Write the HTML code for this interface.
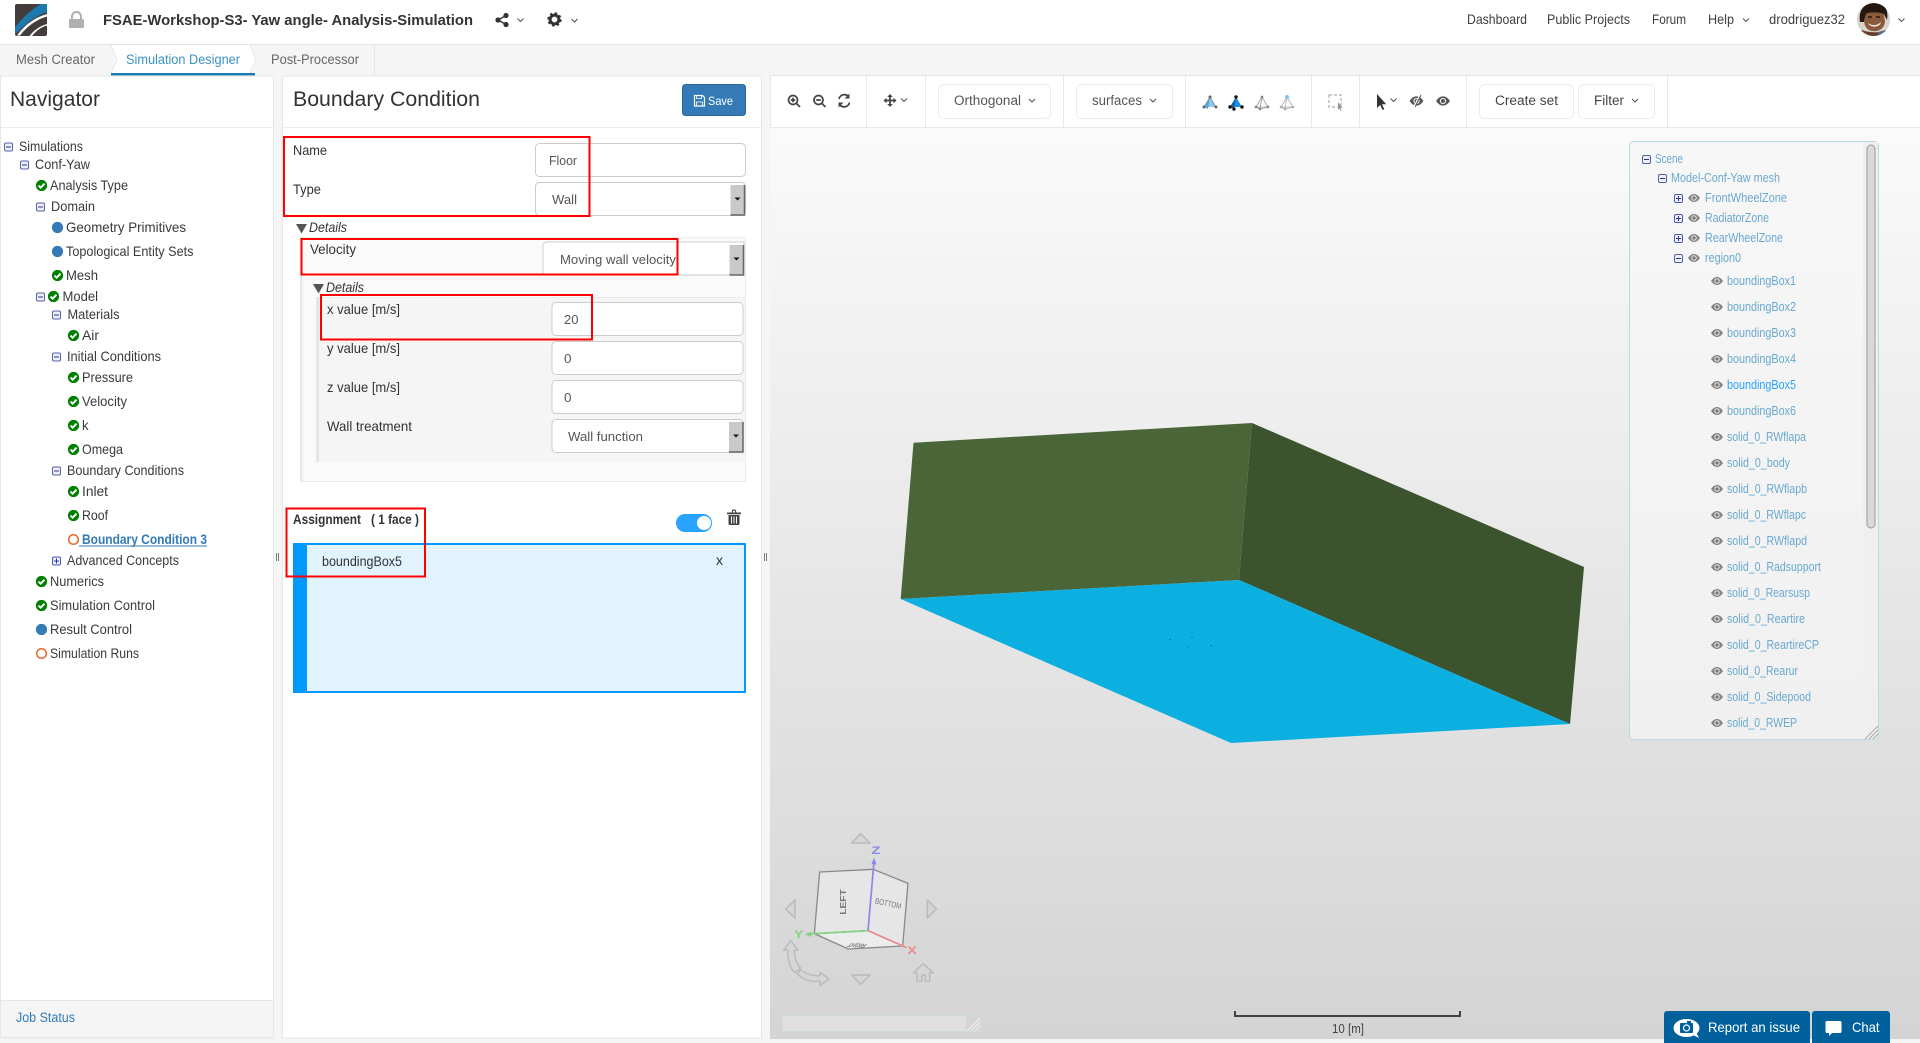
<!DOCTYPE html>
<html lang="en">
<head>
<meta charset="utf-8">
<title>FSAE-Workshop-S3- Yaw angle- Analysis-Simulation</title>
<style>
html,body{margin:0;padding:0;width:1920px;height:1043px;overflow:hidden;background:#f5f5f5}
svg{display:block}
text{font-family:"Liberation Sans",sans-serif;fill:#333;font-size:14px}
.n{font-size:14px;fill:#3a3a3a}
.t{font-size:21px;fill:#333}
.tb{font-size:14px;fill:#3f3f3f}
.v{font-size:13.33px;fill:#555}
.f{font-size:14px;fill:#333}
.d{font-size:14px;font-style:italic;fill:#333}
.s{font-size:12.5px;fill:#6aa9cf}
.b{font-size:13.5px;fill:#555}
</style>
</head>
<body>
<svg xmlns="http://www.w3.org/2000/svg" width="1920" height="1043" viewBox="0 0 1920 1043">
<defs>
<linearGradient id="vp" x1="0" y1="0" x2="0" y2="1"><stop offset="0" stop-color="#fafafa"/><stop offset="1" stop-color="#d4d4d4"/></linearGradient>
<linearGradient id="tr" x1="0" y1="0" x2="0" y2="1"><stop offset="0" stop-color="#f7f7f7"/><stop offset="1" stop-color="#f0f0f0"/></linearGradient>
<g id="ok"><circle r="5.6" fill="#008000"/><path d="M-3 .1L-.9 2.2 3 -1.8" fill="none" stroke="#fff" stroke-width="1.9"/></g>
<g id="bl"><circle r="5.6" fill="#337ab7"/></g>
<g id="or"><circle r="4.8" fill="#fff" stroke="#e8662a" stroke-width="1.5"/></g>
<g id="mi"><rect x="-4" y="-4" width="8" height="8" rx="1.5" fill="#eef0f8" stroke="#5560a8"/><path d="M-2.5 0h5" stroke="#2d3570"/></g>
<g id="pl"><rect x="-4" y="-4" width="8" height="8" rx="1.5" fill="#eef0f8" stroke="#4a55c0"/><path d="M-2.5 0h5M0 -2.5v5" stroke="#2d3590"/></g>
<g id="e"><path d="M-6 0C-4 -3 -2 -4 0 -4S4 -3 6 0C4 3 2 4 0 4S-4 3 -6 0Z" fill="#858585"/><circle r="2.7" fill="#eee"/><circle r="1.7" fill="#777"/></g>
<g id="sb"><rect width="14" height="30" fill="#c9c9c9"/><path d="M14 0V30H0" fill="none" stroke="#666" stroke-width="1.5"/><path d="M4 12.5h6l-3 3z" fill="#111"/></g>
<g id="ch"><path d="M-3 -1.5L0 1.5 3 -1.5" fill="none" stroke="#555" stroke-width="1.1"/></g>
</defs>

<!-- header -->
<rect width="1920" height="44" fill="#fff"/>
<rect y="44" width="1920" height="1" fill="#e4e4e4"/>
<g>
<rect x="15" y="4" width="32" height="32" rx="2" fill="#423d3a"/>
<path d="M47 4V12C38 15 27 22 19 31L15 34V27C22 19 30 10 41 4Z" fill="#1b79ad"/>
<path d="M47 14V16.500C38 19 28 25 20 35.500H17C25 24 36 17 47 14Z" fill="#fff"/>
<path d="M47 24V25.500C41 27 36 31 32 36H29.500C34 30 40 26 47 24Z" fill="#fff"/>
</g>
<g>
<path d="M72 19V16.5a4.5 4.5 0 0 1 9 0V19" fill="none" stroke="#b0b0b0" stroke-width="2"/>
<rect x="69" y="19" width="15" height="9" rx="1.5" fill="#b0b0b0"/>
</g>
<text x="103" y="25" style="font-size:15px;font-weight:700;fill:#333" textLength="370" lengthAdjust="spacingAndGlyphs">FSAE-Workshop-S3- Yaw angle- Analysis-Simulation</text>
<g fill="#333"><circle cx="498" cy="20" r="2.6"/><circle cx="506" cy="15.5" r="2.6"/><circle cx="506" cy="24.5" r="2.6"/><path d="M498 20L506 15.5M498 20L506 24.5" stroke="#333" stroke-width="1.4"/></g>
<use href="#ch" x="520.5" y="20"/>
<g><circle cx="554.5" cy="19.5" r="4.4" fill="none" stroke="#333" stroke-width="3"/><circle cx="554.5" cy="19.5" r="6.2" fill="none" stroke="#333" stroke-width="2" stroke-dasharray="2.4 2.47"/></g>
<use href="#ch" x="574.5" y="20.5"/>
<text class="tb" x="1467" y="24" textLength="60" lengthAdjust="spacingAndGlyphs">Dashboard</text>
<text class="tb" x="1547" y="24" textLength="83" lengthAdjust="spacingAndGlyphs">Public Projects</text>
<text class="tb" x="1652" y="24" textLength="34" lengthAdjust="spacingAndGlyphs">Forum</text>
<text class="tb" x="1708" y="24" textLength="26" lengthAdjust="spacingAndGlyphs">Help</text>
<use href="#ch" x="1746" y="20"/>
<text class="tb" x="1769" y="24" textLength="76" lengthAdjust="spacingAndGlyphs">drodriguez32</text>
<clipPath id="av"><circle cx="1873.5" cy="19.5" r="16.5"/></clipPath>
<g clip-path="url(#av)">
<rect x="1857" y="3" width="33" height="33" fill="#d9d4cc"/>
<path d="M1860 22C1858 8 1866 3 1875 3S1889 9 1887 20L1884 14C1878 12 1870 12 1866 14L1864 22Z" fill="#241710"/>
<path d="M1866 14C1870 12 1878 12 1884 14L1885 22C1884 29 1878 32 1873 31C1868 31 1864 27 1864 20Z" fill="#8a5a3c"/>
<path d="M1868 23C1872 26 1877 26 1881 22C1880 28 1870 28 1868 23Z" fill="#f0e8e0"/>
<path d="M1868 17h4M1876 17h4" stroke="#241710" stroke-width="1.6"/>
<path d="M1857 36L1862 30C1866 32 1880 34 1886 30L1890 36Z" fill="#6b3c2c"/>
<path d="M1878 32L1886 30 1888 36H1878Z" fill="#4e6a8a"/>
</g>
<use href="#ch" x="1901.5" y="20"/>

<!-- tab bar -->
<rect y="45" width="374" height="30" fill="#f5f5f5"/>
<rect x="374" y="45" width="1" height="30" fill="#e4e4e4"/>
<path d="M111 45H250L255 60 250 73H111L116 60Z" fill="#fff"/>
<path d="M111 45L117 60 111 73" fill="none" stroke="#e8e8e8"/>
<path d="M250 45L256 60 250 73" fill="none" stroke="#e8e8e8"/>
<rect x="111" y="73" width="144" height="2.4" fill="#1a7db3"/>
<text x="16" y="64" style="font-size:13.5px;fill:#666" textLength="79" lengthAdjust="spacingAndGlyphs">Mesh Creator</text>
<text x="126" y="64" style="font-size:13.5px;fill:#3d92c4" textLength="114" lengthAdjust="spacingAndGlyphs">Simulation Designer</text>
<text x="271" y="64" style="font-size:13.5px;fill:#666" textLength="88" lengthAdjust="spacingAndGlyphs">Post-Processor</text>

<!-- navigator panel -->
<rect x=".5" y="76" width="273" height="962" fill="#fff" stroke="#e6e6e6"/>
<rect x="1" y="127" width="272" height="1" fill="#ececec"/>
<text class="t" x="10" y="106" textLength="90" lengthAdjust="spacingAndGlyphs">Navigator</text>
<rect x=".5" y="1000.5" width="273" height="37" fill="#f5f5f5" stroke="#e6e6e6"/>
<text x="16" y="1022" style="font-size:13.5px;fill:#337ab7" textLength="59" lengthAdjust="spacingAndGlyphs">Job Status</text>

<use href="#mi" x="8.5" y="147"/><text class="n" x="19" y="151" textLength="64" lengthAdjust="spacingAndGlyphs">Simulations</text>
<use href="#mi" x="24.5" y="165"/><text class="n" x="35" y="169" textLength="55" lengthAdjust="spacingAndGlyphs">Conf-Yaw</text>
<use href="#ok" x="41.5" y="185.5"/><text class="n" x="50" y="190" textLength="78" lengthAdjust="spacingAndGlyphs">Analysis Type</text>
<use href="#mi" x="40.5" y="207"/><text class="n" x="51" y="211" textLength="44" lengthAdjust="spacingAndGlyphs">Domain</text>
<use href="#bl" x="57.5" y="227.5"/><text class="n" x="66" y="232" textLength="120" lengthAdjust="spacingAndGlyphs">Geometry Primitives</text>
<use href="#bl" x="57.5" y="251.5"/><text class="n" x="66" y="256" textLength="127.500" lengthAdjust="spacingAndGlyphs">Topological Entity Sets</text>
<use href="#ok" x="57.500" y="275.5"/><text class="n" x="66" y="280" textLength="32" lengthAdjust="spacingAndGlyphs">Mesh</text>
<use href="#mi" x="40.5" y="297"/><use href="#ok" x="53.5" y="296.5"/><text class="n" x="62.5" y="301" textLength="35.500" lengthAdjust="spacingAndGlyphs">Model</text>
<use href="#mi" x="56.5" y="315"/><text class="n" x="67.5" y="319" textLength="52" lengthAdjust="spacingAndGlyphs">Materials</text>
<use href="#ok" x="73.5" y="335.5"/><text class="n" x="82" y="340" textLength="17" lengthAdjust="spacingAndGlyphs">Air</text>
<use href="#mi" x="56.5" y="357"/><text class="n" x="67" y="361" textLength="94" lengthAdjust="spacingAndGlyphs">Initial Conditions</text>
<use href="#ok" x="73.5" y="377.5"/><text class="n" x="82" y="382" textLength="51" lengthAdjust="spacingAndGlyphs">Pressure</text>
<use href="#ok" x="73.5" y="401.5"/><text class="n" x="82" y="406" textLength="45" lengthAdjust="spacingAndGlyphs">Velocity</text>
<use href="#ok" x="73.5" y="425.5"/><text class="n" x="82" y="430" textLength="6.500" lengthAdjust="spacingAndGlyphs">k</text>
<use href="#ok" x="73.5" y="449.5"/><text class="n" x="82" y="454" textLength="41" lengthAdjust="spacingAndGlyphs">Omega</text>
<use href="#mi" x="56.5" y="471"/><text class="n" x="67" y="475" textLength="117" lengthAdjust="spacingAndGlyphs">Boundary Conditions</text>
<use href="#ok" x="73.5" y="491.5"/><text class="n" x="82" y="496" textLength="26" lengthAdjust="spacingAndGlyphs">Inlet</text>
<use href="#ok" x="73.5" y="515.5"/><text class="n" x="82" y="520" textLength="26" lengthAdjust="spacingAndGlyphs">Roof</text>
<use href="#or" x="73.5" y="539.5"/><text x="82" y="544" style="font-size:14px;font-weight:700;fill:#337ab7" textLength="125" lengthAdjust="spacingAndGlyphs">Boundary Condition 3</text>
<rect x="79" y="545.500" width="128" height="1" fill="#337ab7"/>
<use href="#pl" x="56.5" y="561"/><text class="n" x="67" y="565" textLength="112" lengthAdjust="spacingAndGlyphs">Advanced Concepts</text>
<use href="#ok" x="41.5" y="581.5"/><text class="n" x="50" y="586" textLength="54" lengthAdjust="spacingAndGlyphs">Numerics</text>
<use href="#ok" x="41.5" y="605.5"/><text class="n" x="50" y="610" textLength="105" lengthAdjust="spacingAndGlyphs">Simulation Control</text>
<use href="#bl" x="41.5" y="629.5"/><text class="n" x="50" y="634" textLength="82" lengthAdjust="spacingAndGlyphs">Result Control</text>
<use href="#or" x="41.5" y="653.5"/><text class="n" x="50" y="658" textLength="89" lengthAdjust="spacingAndGlyphs">Simulation Runs</text>

<!-- gutters -->
<path d="M276.5 553v8M278.500 553v8M764.5 553v8M766.500 553v8" stroke="#666" stroke-width=".8"/>

<!-- boundary condition panel -->
<rect x="282.5" y="76" width="479" height="962" fill="#fff" stroke="#e6e6e6"/>
<rect x="283" y="127" width="478" height="1" fill="#ececec"/>
<text class="t" x="293" y="106" textLength="187" lengthAdjust="spacingAndGlyphs">Boundary Condition</text>
<rect x="682.5" y="84.500" width="63" height="31" rx="3" fill="#337ab7" stroke="#2b6699"/>
<path d="M694.5 95.5h8l2 2v8.500h-10z" fill="none" stroke="#fff" stroke-width="1.200"/><path d="M696.500 95.500v3h5v-3M696.5 106v-4h6v4" fill="none" stroke="#fff" stroke-width=".8"/>
<text x="708" y="105" style="font-size:12px;fill:#fff" textLength="25" lengthAdjust="spacingAndGlyphs">Save</text>

<text class="f" x="293" y="155" textLength="34" lengthAdjust="spacingAndGlyphs">Name</text>
<rect x="535.5" y="143.500" width="210" height="33" rx="4" fill="#fff" stroke="#ccc"/>
<text class="v" x="549" y="165" textLength="28" lengthAdjust="spacingAndGlyphs">Floor</text>
<text class="f" x="293" y="194" textLength="28" lengthAdjust="spacingAndGlyphs">Type</text>
<rect x="535.5" y="182.500" width="210" height="33" rx="4" fill="#fff" stroke="#ccc"/>
<text class="v" x="552" y="204" textLength="25" lengthAdjust="spacingAndGlyphs">Wall</text>
<use href="#sb" x="730.500" y="185"/>

<path d="M296 224h11l-5.500 9.500z" fill="#555"/>
<text class="d" x="309" y="232" textLength="38" lengthAdjust="spacingAndGlyphs">Details</text>
<rect x="300.500" y="237.500" width="445" height="244" fill="#fafafa" stroke="#ececec"/>
<rect x="300" y="237" width="2.500" height="245" fill="#e8e8e8"/>
<text class="f" x="310" y="254" textLength="46" lengthAdjust="spacingAndGlyphs">Velocity</text>
<path d="M744 242H547a4 4 0 0 0-4 4V275H744Z" fill="#fff" stroke="#ccc"/>
<text class="v" x="560" y="264" textLength="116" lengthAdjust="spacingAndGlyphs">Moving wall velocity</text>
<use href="#sb" x="729.500" y="245"/>
<path d="M313 284h11l-5.500 9.500z" fill="#555"/>
<text class="d" x="326" y="292" textLength="38" lengthAdjust="spacingAndGlyphs">Details</text>
<rect x="316" y="297" width="429" height="165" fill="#f5f5f5"/>
<rect x="316" y="297" width="429" height="1" fill="#ececec"/>
<rect x="316" y="297" width="3" height="165" fill="#e6e6e6"/>
<text class="f" x="327" y="314" textLength="73" lengthAdjust="spacingAndGlyphs">x value [m/s]</text>
<rect x="552" y="302.500" width="191" height="33" rx="4" fill="#fff" stroke="#ccc"/>
<text class="v" x="564" y="324" textLength="14.500" lengthAdjust="spacingAndGlyphs">20</text>
<text class="f" x="327" y="353" textLength="73" lengthAdjust="spacingAndGlyphs">y value [m/s]</text>
<rect x="552" y="341.500" width="191" height="33" rx="4" fill="#fff" stroke="#ccc"/>
<text class="v" x="564" y="363" textLength="7.500" lengthAdjust="spacingAndGlyphs">0</text>
<text class="f" x="327" y="392" textLength="73" lengthAdjust="spacingAndGlyphs">z value [m/s]</text>
<rect x="552" y="380.500" width="191" height="33" rx="4" fill="#fff" stroke="#ccc"/>
<text class="v" x="564" y="402" textLength="7.500" lengthAdjust="spacingAndGlyphs">0</text>
<text class="f" x="327" y="431" textLength="85" lengthAdjust="spacingAndGlyphs">Wall treatment</text>
<rect x="552" y="419.500" width="191" height="33" rx="4" fill="#fff" stroke="#ccc"/>
<text class="v" x="568" y="441" textLength="75" lengthAdjust="spacingAndGlyphs">Wall function</text>
<use href="#sb" x="729" y="422"/>

<text x="293" y="524" style="font-size:13.5px;font-weight:700;fill:#333" textLength="68" lengthAdjust="spacingAndGlyphs">Assignment</text>
<text x="371" y="524" style="font-size:13.5px;font-weight:700;fill:#333" textLength="48" lengthAdjust="spacingAndGlyphs">( 1 face )</text>
<rect x="676" y="514" width="36" height="18" rx="9" fill="#29a3ff"/>
<circle cx="704" cy="523" r="7" fill="#fff"/>
<g fill="#444"><path d="M727 512.500h14v1.800h-14zM731.500 512.500l1-3h3l1 3h-1.200l-.6-1.800h-1.400l-.6 1.800z"/><path d="M728.500 515h11v8.500a1.500 1.500 0 0 1-1.500 1.500h-8a1.500 1.500 0 0 1-1.500-1.500z"/></g>
<path d="M731.500 516.500v7M734 516.500v7M736.500 516.500v7" stroke="#fff" stroke-width="1"/>
<rect x="294" y="544" width="451" height="148" fill="#e1f3fe" stroke="#0099ff" stroke-width="2"/>
<rect x="293" y="543" width="14" height="150" fill="#0099ff"/>
<text x="322" y="566" style="font-size:13.5px;fill:#333" textLength="80" lengthAdjust="spacingAndGlyphs">boundingBox5</text>
<text x="716" y="565" style="font-size:13.5px;fill:#333" textLength="7" lengthAdjust="spacingAndGlyphs">x</text>

<!-- red annotations -->
<g fill="none" stroke="#f00" stroke-width="2">
<rect x="284" y="137" width="305.500" height="79"/>
<rect x="301.500" y="239" width="376" height="35.500"/>
<rect x="321" y="295" width="271" height="44.500"/>
<rect x="286.500" y="508.500" width="138.500" height="68"/>
</g>

<!-- viewer -->
<rect x="770" y="128" width="1150" height="911" fill="url(#vp)"/>
<rect x="770" y="75" width="1150" height="52" fill="#fff"/>
<rect x="770" y="75" width="1150" height="1" fill="#e4e4e4"/>
<rect x="770" y="127" width="1150" height="1" fill="#e8e8e8"/>
<rect x="770" y="75" width="1" height="53" fill="#e8e8e8"/>
<path d="M866.500 75v52M925.500 75v52M1063.500 75v52M1185.500 75v52M1311.500 75v52M1359.500 75v52M1466.500 75v52M1667.500 75v52" stroke="#e8e8e8"/>
<g fill="none" stroke="#444" stroke-width="1.700">
<circle cx="793" cy="100" r="4.500"/><path d="M796.500 103.500l3.500 3.500M790.700 100h4.600M793 97.700v4.600"/>
<circle cx="818.500" cy="100" r="4.500"/><path d="M822 103.500l3.500 3.500M816.200 100h4.600"/>
<path d="M839 99a5.500 5.500 0 0 1 9.500-2.500M849.500 102.500a5.500 5.500 0 0 1-9.500 2.500"/>
</g>
<path d="M849.500 93.500v5h-5zM838.500 107.500v-5h5z" fill="#444"/>
<g fill="#444"><path d="M883.500 100.500l3-2.800v5.600zM896.500 100.500l-3-2.800v5.600zM890 94l-2.800 3h5.600zM890 107l-2.800-3h5.600z"/><path d="M885 100.500h10M890 95.500v10" stroke="#444" stroke-width="1.800"/></g>
<use href="#ch" x="904" y="100"/>
<rect x="938.500" y="84.500" width="112" height="34" rx="5" fill="#fff" stroke="#ececec"/>
<text class="b" x="954" y="105" textLength="67" lengthAdjust="spacingAndGlyphs">Orthogonal</text>
<use href="#ch" x="1032" y="100.500"/>
<rect x="1076.500" y="84.500" width="96" height="34" rx="5" fill="#fff" stroke="#ececec"/>
<text class="b" x="1092" y="105" textLength="50" lengthAdjust="spacingAndGlyphs">surfaces</text>
<use href="#ch" x="1153" y="100.500"/>
<g>
<path d="M1210 97l-6 10 12 0z" fill="#8fc8ee"/><path d="M1210 97l-6 10 4 2z" fill="#5fa8dc"/>
<path d="M1210 97L1204 107M1210 97L1216 107" stroke="#777" stroke-width=".7"/>
<g fill="#666"><circle cx="1210" cy="97" r="1.500"/><circle cx="1204" cy="107" r="1.500"/><circle cx="1216" cy="107" r="1.500"/></g>
<path d="M1236 97l-6 10 12 0z" fill="#1e8fe0"/><path d="M1236 97l-6 10 4 2z" fill="#0d5fa8"/>
<g fill="#111"><circle cx="1236" cy="97" r="1.700"/><circle cx="1230" cy="107" r="1.700"/><circle cx="1242" cy="107" r="1.700"/><circle cx="1234" cy="109" r="1.700"/></g>
<path d="M1262 97l-6 10 12 0zM1262 97l-2 12-4-2M1260 109l8-2" fill="none" stroke="#999" stroke-width=".8"/>
<g fill="#888"><circle cx="1262" cy="97" r="1.400"/><circle cx="1256" cy="107" r="1.400"/><circle cx="1268" cy="107" r="1.400"/><circle cx="1260" cy="109" r="1.400"/></g>
<path d="M1287 97l-6 10 12 0zM1287 97l-2 12-4-2M1285 109l8-2" fill="none" stroke="#aaa" stroke-width=".8"/>
<g fill="#aaa"><circle cx="1281" cy="107" r="1.300"/><circle cx="1293" cy="107" r="1.300"/><circle cx="1285" cy="109" r="1.300"/></g><circle cx="1287" cy="97" r="2" fill="#7cc4f4"/>
</g>
<rect x="1329" y="95" width="12" height="12" fill="none" stroke="#bbb" stroke-width="1.400" stroke-dasharray="3 2"/>
<path d="M1338 102v8l1.500-1.500 1 2.500 1-.5-1-2.500h2.200z" fill="#999"/>
<path d="M1377 94v14l3.200-3 2.300 5 1.800-.8-2.300-5h4.200z" fill="#333"/>
<use href="#ch" x="1393.500" y="100"/>
<g transform="translate(1416.500 101) scale(1.150)"><path d="M-6 0C-4 -3 -2 -4 0 -4S4 -3 6 0C4 3 2 4 0 4S-4 3 -6 0Z" fill="#555"/><circle r="2.700" fill="#eee"/><circle r="1.700" fill="#555"/></g><path d="M1420 95l-6 12" stroke="#fff" stroke-width="1.500"/><path d="M1421 95l-6 12" stroke="#555" stroke-width="1"/>
<g transform="translate(1443 101) scale(1.150)"><path d="M-6 0C-4 -3 -2 -4 0 -4S4 -3 6 0C4 3 2 4 0 4S-4 3 -6 0Z" fill="#555"/><circle r="2.700" fill="#eee"/><circle r="1.700" fill="#555"/></g>
<rect x="1479.500" y="84.500" width="94" height="34" rx="5" fill="#fff" stroke="#ececec"/>
<text class="b" x="1495" y="105" style="fill:#444" textLength="63" lengthAdjust="spacingAndGlyphs">Create set</text>
<rect x="1578.500" y="84.500" width="76" height="34" rx="5" fill="#fff" stroke="#ececec"/>
<text class="b" x="1594" y="105" style="fill:#444" textLength="30" lengthAdjust="spacingAndGlyphs">Filter</text>
<use href="#ch" x="1635" y="100.500"/>

<!-- 3D model -->
<polygon points="913.500,442.700 1252,423 1239,580 900.700,599" fill="#4a6638"/>
<polygon points="1252,423 1584,567 1570,724 1239,580" fill="#3c542e"/>
<polygon points="1239,580 1570,724 1231,743 900.700,599" fill="#0bb0e0"/>
<g fill="#0b7fa3"><rect x="1169" y="639" width="2" height="1"/><rect x="1191" y="637" width="2" height="1"/><rect x="1188" y="647" width="1" height="1"/><rect x="1210" y="645" width="2" height="1"/></g>

<!-- scene tree panel -->
<rect x="1629.500" y="141.500" width="249" height="598" rx="4" fill="url(#tr)" stroke="#b5dbe8"/>
<rect x="1863" y="142" width="15" height="583" fill="#efefef"/>
<rect x="1867" y="145" width="8" height="383" rx="4" fill="#d9d9d9" stroke="#9a9a9a"/>
<path d="M1865 739l13-13M1869 739l9-9M1873 739l5-5" stroke="#aaa" stroke-width="1"/>
<use href="#mi" x="1646.500" y="159.500"/><text class="s" x="1655" y="163" textLength="28" lengthAdjust="spacingAndGlyphs">Scene</text>
<use href="#mi" x="1662.500" y="178.500"/><text class="s" x="1671" y="182" textLength="109" lengthAdjust="spacingAndGlyphs">Model-Conf-Yaw mesh</text>
<use href="#pl" x="1678.500" y="198.500"/><use href="#e" x="1694" y="198"/><text class="s" x="1705" y="202" textLength="82" lengthAdjust="spacingAndGlyphs">FrontWheelZone</text>
<use href="#pl" x="1678.500" y="218.500"/><use href="#e" x="1694" y="218"/><text class="s" x="1705" y="222" textLength="64" lengthAdjust="spacingAndGlyphs">RadiatorZone</text>
<use href="#pl" x="1678.500" y="238.500"/><use href="#e" x="1694" y="238"/><text class="s" x="1705" y="242" textLength="78" lengthAdjust="spacingAndGlyphs">RearWheelZone</text>
<use href="#mi" x="1678.500" y="258.500"/><use href="#e" x="1694" y="258"/><text class="s" x="1705" y="262" textLength="36" lengthAdjust="spacingAndGlyphs">region0</text>
<use href="#e" x="1717" y="281"/><text class="s" x="1727" y="285" textLength="69" lengthAdjust="spacingAndGlyphs">boundingBox1</text>
<use href="#e" x="1717" y="307"/><text class="s" x="1727" y="311" textLength="69" lengthAdjust="spacingAndGlyphs">boundingBox2</text>
<use href="#e" x="1717" y="333"/><text class="s" x="1727" y="337" textLength="69" lengthAdjust="spacingAndGlyphs">boundingBox3</text>
<use href="#e" x="1717" y="359"/><text class="s" x="1727" y="363" textLength="69" lengthAdjust="spacingAndGlyphs">boundingBox4</text>
<use href="#e" x="1717" y="385"/><text class="s" x="1727" y="389" style="fill:#29a3ff" textLength="69" lengthAdjust="spacingAndGlyphs">boundingBox5</text>
<use href="#e" x="1717" y="411"/><text class="s" x="1727" y="415" textLength="69" lengthAdjust="spacingAndGlyphs">boundingBox6</text>
<use href="#e" x="1717" y="437"/><text class="s" x="1727" y="441" textLength="79" lengthAdjust="spacingAndGlyphs">solid_0_RWflapa</text>
<use href="#e" x="1717" y="463"/><text class="s" x="1727" y="467" textLength="63" lengthAdjust="spacingAndGlyphs">solid_0_body</text>
<use href="#e" x="1717" y="489"/><text class="s" x="1727" y="493" textLength="80" lengthAdjust="spacingAndGlyphs">solid_0_RWflapb</text>
<use href="#e" x="1717" y="515"/><text class="s" x="1727" y="519" textLength="79" lengthAdjust="spacingAndGlyphs">solid_0_RWflapc</text>
<use href="#e" x="1717" y="541"/><text class="s" x="1727" y="545" textLength="80" lengthAdjust="spacingAndGlyphs">solid_0_RWflapd</text>
<use href="#e" x="1717" y="567"/><text class="s" x="1727" y="571" textLength="94" lengthAdjust="spacingAndGlyphs">solid_0_Radsupport</text>
<use href="#e" x="1717" y="593"/><text class="s" x="1727" y="597" textLength="83" lengthAdjust="spacingAndGlyphs">solid_0_Rearsusp</text>
<use href="#e" x="1717" y="619"/><text class="s" x="1727" y="623" textLength="78" lengthAdjust="spacingAndGlyphs">solid_0_Reartire</text>
<use href="#e" x="1717" y="645"/><text class="s" x="1727" y="649" textLength="92" lengthAdjust="spacingAndGlyphs">solid_0_ReartireCP</text>
<use href="#e" x="1717" y="671"/><text class="s" x="1727" y="675" textLength="71" lengthAdjust="spacingAndGlyphs">solid_0_Rearur</text>
<use href="#e" x="1717" y="697"/><text class="s" x="1727" y="701" textLength="84" lengthAdjust="spacingAndGlyphs">solid_0_Sidepood</text>
<use href="#e" x="1717" y="723"/><text class="s" x="1727" y="727" textLength="70" lengthAdjust="spacingAndGlyphs">solid_0_RWEP</text>

<!-- orientation cube -->
<g transform="translate(770 820) scale(.33333)">
<g fill="#d6d6d6" stroke="#bdbdbd" stroke-width="5" stroke-linejoin="round">
<path d="M272 41L245 69H300Z"/><path d="M47 267L75 240V294Z"/><path d="M472 240V294L499 267Z"/><path d="M246 465H300L272 493Z"/>
<path d="M62 362L41 390H53C53 420 60 445 75 458L92 445C78 430 73 410 73 390H85Z"/>
<path d="M82 462C100 480 125 487 150 483V496L177 477 150 456V467C130 469 108 462 92 450Z"/>
<path d="M460 431L431 458H441V484H455V465H466V484H479V458H489Z"/>
</g>
<g fill="#e6e6e6" stroke="#8a8a8a" stroke-width="4" stroke-linejoin="round">
<path d="M149 156L310 148 294 332 133 341Z"/><path d="M310 148L414 190 398 378 294 332Z"/>
<path d="M133 341L294 332 398 378 235 387Z" fill="#ececec"/>
</g>
<text transform="translate(228 284) rotate(-90)" style="font-size:26px;fill:#777;font-weight:700" textLength="76" lengthAdjust="spacingAndGlyphs">LEFT</text>
<text transform="translate(314 250) rotate(12)" style="font-size:24px;fill:#777" textLength="80" lengthAdjust="spacingAndGlyphs">BOTTOM</text>
<text transform="translate(292 372) rotate(184) skewX(-40)" style="font-size:18px;fill:#777;font-weight:700" textLength="52" lengthAdjust="spacingAndGlyphs">RIGHT</text>
<path d="M294 332L312 125" stroke="#8a8aee" stroke-width="5"/><path d="M312 113L304 133H320Z" fill="#8a8aee"/>
<path d="M294 332L118 342" stroke="#84d484" stroke-width="5"/><path d="M104 343L124 335V351Z" fill="#84d484"/>
<path d="M294 332L410 383" stroke="#ea8a8a" stroke-width="5"/>
<text x="304" y="102" style="font-size:34px;font-weight:700;fill:#8a8aee" textLength="27" lengthAdjust="spacingAndGlyphs">Z</text>
<text x="72" y="354" style="font-size:34px;font-weight:700;fill:#84d484" textLength="28" lengthAdjust="spacingAndGlyphs">Y</text>
<text x="412" y="402" style="font-size:34px;font-weight:700;fill:#ea8a8a" textLength="28" lengthAdjust="spacingAndGlyphs">X</text>
</g>
<rect x="782.500" y="1015.500" width="198" height="16" fill="#e0e0e0" stroke="#cfdcde"/>
<rect x="966" y="1016" width="14" height="15" fill="#d4d4d4"/>
<path d="M967 1031l13-13M971 1031l9-9M975 1031l5-5" stroke="#f0f0f0" stroke-width="1"/>

<!-- scale bar -->
<path d="M1235 1011v5H1460v-5" fill="none" stroke="#444" stroke-width="2"/>
<text x="1332" y="1033" style="font-size:13px;fill:#444" textLength="32" lengthAdjust="spacingAndGlyphs">10 [m]</text>

<!-- bottom buttons -->
<path d="M1664 1043V1014a3 3 0 0 1 3-3H1807a3 3 0 0 1 3 3V1043Z" fill="#00609c"/>
<path d="M1812 1043V1014a3 3 0 0 1 3-3H1887a3 3 0 0 1 3 3V1043Z" fill="#00609c"/>
<ellipse cx="1686.500" cy="1028" rx="13" ry="9" fill="#fff"/><path d="M1693 1035l6 3-3-6z" fill="#fff"/>
<rect x="1680" y="1023" width="13" height="10" rx="1" fill="#00609c"/><rect x="1687" y="1021" width="4" height="2" fill="#00609c"/><circle cx="1686.500" cy="1028" r="3" fill="none" stroke="#fff" stroke-width="1.200"/>
<text x="1708" y="1032" style="font-size:14px;fill:#fff" textLength="92" lengthAdjust="spacingAndGlyphs">Report an issue</text>
<path d="M1827 1021h13a1.500 1.500 0 0 1 1.500 1.500v9a1.500 1.500 0 0 1-1.500 1.500h-8l-3 3v-3h-2a1.500 1.500 0 0 1-1.500-1.500v-9a1.500 1.500 0 0 1 1.500-1.500z" fill="#fff"/>
<text x="1852" y="1032" style="font-size:14px;fill:#fff" textLength="27.500" lengthAdjust="spacingAndGlyphs">Chat</text>
</svg>
</body>
</html>
